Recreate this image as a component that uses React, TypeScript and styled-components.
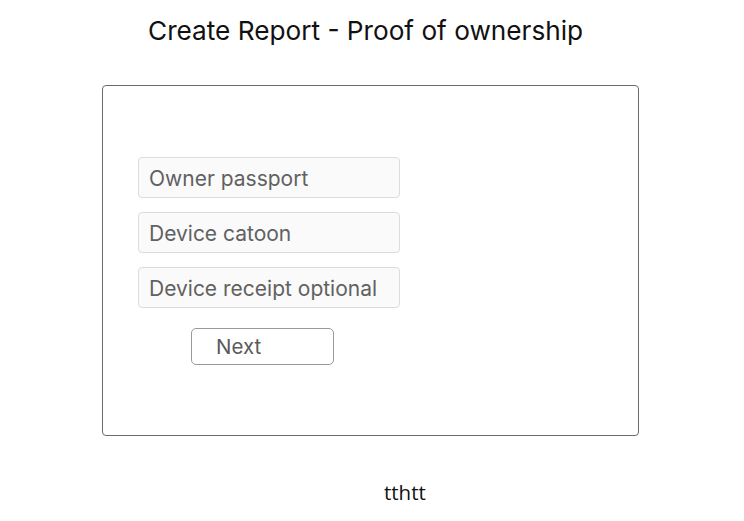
import React from "react";
import styled, { createGlobalStyle } from "styled-components";

const Global = createGlobalStyle`
  html, body { margin: 0; padding: 0; background: #fff; }
  body { font-family: Inter, "Noto Sans", sans-serif; }
`;

const Page = styled.div`
  width: 744px;
  display: flex;
  flex-direction: column;
  align-items: flex-start;
`;

const Title = styled.h1`
  margin: 14px 0 0 148px;
  font-family: Inter, sans-serif;
  font-weight: 400;
  font-size: 26.2px;
  line-height: 34px;
  color: #111;
`;

const Card = styled.div`
  box-sizing: border-box;
  margin: 37px 0 0 102px;
  width: 537px;
  height: 351px;
  border: 1px solid #6b6b6b;
  border-radius: 4px;
  padding: 71px 0 0 35px;
  display: flex;
  flex-direction: column;
  align-items: flex-start;
  gap: 14px;
`;

const Field = styled.input`
  box-sizing: border-box;
  width: 262px;
  height: 41px;
  padding: 1px 10px 0;
  border: 1px solid #dcdcdc;
  border-radius: 4px;
  background: #fafafa;
  font-family: Inter, sans-serif;
  font-size: 21px;
  color: #555;
  outline: none;
  &::placeholder { color: #616161; }
`;

const NextButton = styled.button`
  box-sizing: border-box;
  margin: 6px 0 0 53px;
  width: 143px;
  height: 37px;
  padding: 0 0 0 24px;
  text-align: left;
  border: 1px solid #9a9a9a;
  border-radius: 5px;
  background: #fff;
  font-family: Inter, sans-serif;
  font-size: 20.5px;
  color: #5a5a5a;
`;

const Footer = styled.div`
  margin: 42px 0 0 384px;
  font-family: "Open Sans", sans-serif;
  font-size: 20.5px;
  color: #111;
`;

export default function App() {
  return (
    <>
      <Global />
      <Page>
        <Title>Create Report - Proof of ownership</Title>
        <Card>
          <Field placeholder="Owner passport" />
          <Field placeholder="Device catoon" />
          <Field placeholder="Device receipt optional" />
          <NextButton>Next</NextButton>
        </Card>
        <Footer>tthtt</Footer>
      </Page>
    </>
  );
}
